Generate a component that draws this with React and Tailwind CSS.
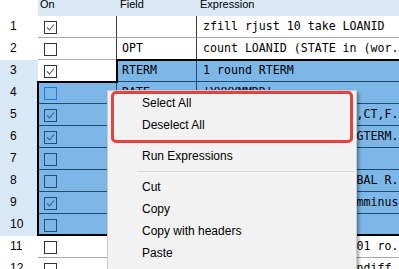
import React from "react";

const rows = [
  { n: 1, on: true, field: "", expr: "zfill rjust 10 take LOANID", sel: 0 },
  { n: 2, on: false, field: "OPT", expr: "count LOANID (STATE in (wor.", sel: 0 },
  { n: 3, on: true, field: "RTERM", expr: "1 round RTERM", sel: 1 },
  { n: 4, on: false, field: "DATE", expr: "'YYYYMMDD'", sel: 2, focus: true },
  { n: 5, on: true, field: "STATE", expr: "LOANSTATE in (AK,CA,CO,CT,F.", sel: 2 },
  { n: 6, on: true, field: "TERM", expr: "ORIGTERM - 120 min ORIGTERM.", sel: 2 },
  { n: 7, on: false, field: "", expr: "", sel: 2 },
  { n: 8, on: false, field: "BAL", expr: "LOANAMT gt 10 and ORIGBAL R.", sel: 2 },
  { n: 9, on: true, field: "PMT", expr: "PMT 12 take ORIGBAL 0 mminus", sel: 2 },
  { n: 10, on: false, field: "", expr: "", sel: 2 },
  { n: 11, on: false, field: "YEAR", expr: "DATE 'YYYYMMDD' fmt 2001 ro.", sel: 0 },
  { n: 12, on: false, field: "DIFF", expr: "ORIGBAL CURBAL 1 2 3 andiff", sel: 0 },
];

function Check({ checked, selected, focus }) {
  const border = focus ? "#1a7fdc" : selected ? "#1f4f7c" : "#333333";
  const mark = selected ? "#2f5f8c" : "#5e5e5e";
  return (
    <svg width="13" height="13" viewBox="0 0 13 13" className="block">
      <rect x="0.5" y="0.5" width="12" height="12" fill={selected ? "none" : "#ffffff"} stroke={border} strokeWidth="1" />
      {checked && (
        <polyline points="3,6.5 5.5,9 10,3.5" fill="none" stroke={mark} strokeWidth="1.1" />
      )}
    </svg>
  );
}

const mono = "font-['DejaVu_Sans_Mono',monospace] text-[11.6px] text-black";

function Row({ r }) {
  const onSel = r.sel === 2;
  const restSel = r.sel >= 1;
  const hdrBg = r.sel ? "bg-[#d9e8f6]" : "bg-white";
  const onBg = onSel ? "bg-[#7db7e8] border-[#1f4a72]" : "bg-white border-[#a8a8a8]";
  const restBg = restSel ? "bg-[#7db7e8] border-[#1f4a72]" : "bg-white border-[#a8a8a8]";
  return (
    <div className="flex h-[22px]">
      <div className={`w-[38px] shrink-0 ${hdrBg} flex items-center pl-[10px] pb-[2px] text-[12px] text-black`}>
        {r.n}
      </div>
      <div className={`w-[79px] shrink-0 border-b border-r ${onBg} ${onSel ? "" : "border-r-[#3a3a3a]"} pl-[6px] pt-[5px]`}>
        <Check checked={r.on} selected={onSel} focus={r.focus} />
      </div>
      <div className={`w-[80px] shrink-0 border-b border-r ${restBg} ${restSel ? "" : "border-r-[#3a3a3a]"} pl-[5px] flex items-center overflow-hidden whitespace-nowrap ${mono}`}>
        {r.field}
      </div>
      <div className={`flex-1 border-b ${restBg} pl-[6px] flex items-center overflow-hidden whitespace-nowrap ${mono}`}>
        {r.expr}
      </div>
    </div>
  );
}

function Item({ children }) {
  return (
    <div className="h-[22px] flex items-center pl-[34px] pb-[1px] text-[12px] text-black">{children}</div>
  );
}

function Sep() {
  return (
    <div className="h-[9px] flex items-center">
      <div className="ml-[29px] mr-[2px] flex-1 h-px bg-[#d7d7d7]" />
    </div>
  );
}

export default function App() {
  return (
    <div className="relative w-[399px] h-[269px] overflow-hidden bg-white font-['Liberation_Sans',Arial,sans-serif]">
      <div className="flex h-[16px]">
        <div className="w-[38px] shrink-0 bg-white" />
        <div className="flex-1 flex bg-[#dae8f6] text-[11px] text-black leading-none">
          <div className="w-[79px] pl-[2px] -mt-[1px]">On</div>
          <div className="w-[80px] pl-[3px] -mt-[1px]">Field</div>
          <div className="flex-1 pl-[3px] -mt-[1px]">Expression</div>
        </div>
      </div>
      {rows.map((r) => (
        <Row key={r.n} r={r} />
      ))}

      {/* selection outline */}
      <div className="absolute left-[116px] top-[59px] w-[283px] h-[2px] bg-black" />
      <div className="absolute left-[116px] top-[59px] w-[2px] h-[24px] bg-black" />
      <div className="absolute left-[37px] top-[81px] w-[81px] h-[2px] bg-black" />
      <div className="absolute left-[37px] top-[81px] w-[2px] h-[155px] bg-black" />
      <div className="absolute left-[37px] top-[234px] w-[362px] h-[2px] bg-black" />

      {/* context menu */}
      <div className="absolute left-[107px] top-[90px] w-[250px] h-[200px] border border-[#cccccc] bg-[#f2f2f2] pt-[1px] shadow-[2px_2px_3px_rgba(0,0,0,0.35)]">
        <Item>Select All</Item>
        <Item>Deselect All</Item>
        <Sep />
        <Item>Run Expressions</Item>
        <Sep />
        <Item>Cut</Item>
        <Item>Copy</Item>
        <Item>Copy with headers</Item>
        <Item>Paste</Item>
        <Item>Paste from Windows clipboard</Item>
      </div>

      {/* red highlight */}
      <div className="absolute left-[111px] top-[91px] w-[242px] h-[52px] border-[3px] border-[#e8403e] rounded-[5px]" />
    </div>
  );
}
